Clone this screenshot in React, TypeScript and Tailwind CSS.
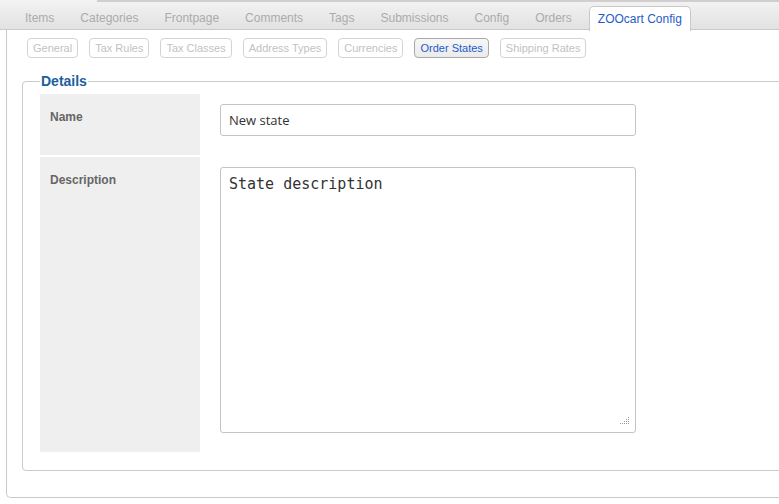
const TABS = ['Items', 'Categories', 'Frontpage', 'Comments', 'Tags', 'Submissions', 'Config', 'Orders']

const SUBTABS = ['General', 'Tax Rules', 'Tax Classes', 'Address Types', 'Currencies', 'Order States', 'Shipping Rates']

function Grip() {
  // dotted resize grip, like the one in the screenshot
  const dots = [
    [8, 0],
    [6, 2], [8, 2],
    [4, 4], [6, 4], [8, 4],
    [0, 6], [2, 6], [4, 6], [6, 6], [8, 6],
  ]
  return (
    <svg width="10" height="8" viewBox="0 0 10 8" className="absolute right-[6px] bottom-[8px]">
      {dots.map(([x, y], i) => (
        <rect key={i} x={x} y={y} width="1" height="1" fill="#9a9a9a" />
      ))}
    </svg>
  )
}

export default function App() {
  return (
    <div className="w-[779px] h-[504px] overflow-hidden bg-white font-['Liberation_Sans',Arial,sans-serif]">
      {/* top tab bar */}
      <div className="h-[30px] w-[900px] border-b border-[#c9c9c9] bg-gradient-to-b from-[#f3f3f3] to-[#e2e2e2]">
        <div className="flex h-[2px]">
          <div className="w-[97px]" />
          <div className="flex-1 bg-[#cfcfcf]" />
        </div>
        <div className="flex items-end h-[28px] pl-[16px] gap-[8px]">
          {TABS.map((t) => (
            <div key={t} className="h-[24px] px-[9px] flex items-center text-[12px] text-[#ababab]">
              {t}
            </div>
          ))}
          <div className="-mb-[1px] h-[25px] px-[8px] flex items-center rounded-t-[5px] border border-b-0 border-[#c9c9c9] bg-white text-[12px] text-[#1f5cc9]">
            ZOOcart Config
          </div>
        </div>
      </div>

      {/* content panel */}
      <div className="ml-[6px] w-[900px] h-[468px] border-l border-b border-[#c9c9c9] rounded-bl-[5px] pl-[20px] pt-[8px]">
        <div className="flex gap-[11px]">
          {SUBTABS.map((s) =>
            s === 'Order States' ? (
              <div
                key={s}
                className="h-[20px] px-[5px] flex items-center rounded-[4px] border border-[#a9a9a9] bg-gradient-to-b from-[#f7f7f7] to-[#ebebeb] text-[11px] text-[#1f5cc9]"
              >
                {s}
              </div>
            ) : (
              <div
                key={s}
                className="h-[20px] px-[5px] flex items-center rounded-[4px] border border-[#d3d3d3] text-[11px] text-[#c2c2c2]"
              >
                {s}
              </div>
            ),
          )}
        </div>

        <fieldset className="mt-[15px] -ml-[5px] w-[860px] border border-[#cacaca] rounded-[4px] pl-[17px] pt-[5px] pb-[18px]">
          <legend className="px-[1px] text-[14px] leading-[16px] font-bold text-[#1b609e]">Details</legend>
          <div className="flex flex-col gap-[2px]">
            <div className="flex">
              <div className="w-[160px] h-[61px] bg-[#efefef] pl-[10px] pt-[16px] text-[12px] leading-[14px] font-bold text-[#666]">
                Name
              </div>
              <div className="pl-[20px] pt-[10px]">
                <input
                  defaultValue="New state"
                  className="w-[416px] h-[32px] rounded-[3px] border border-[#c4c4c4] px-[8px] text-[13px] text-[#333] font-['Open_Sans','Noto_Sans',sans-serif] outline-none"
                />
              </div>
            </div>
            <div className="flex">
              <div className="w-[160px] h-[295px] bg-[#efefef] pl-[10px] pt-[16px] text-[12px] leading-[14px] font-bold text-[#666]">
                Description
              </div>
              <div className="pl-[20px] pt-[10px]">
                <div className="relative w-[416px] h-[266px]">
                  <textarea
                    defaultValue="State description"
                    className="block w-full h-full resize-none rounded-[3px] border border-[#c4c4c4] px-[8px] py-[6px] text-[15px] leading-[20px] text-[#333] font-['DejaVu_Sans_Mono',monospace] outline-none"
                  />
                  <Grip />
                </div>
              </div>
            </div>
          </div>
        </fieldset>
      </div>
    </div>
  )
}
